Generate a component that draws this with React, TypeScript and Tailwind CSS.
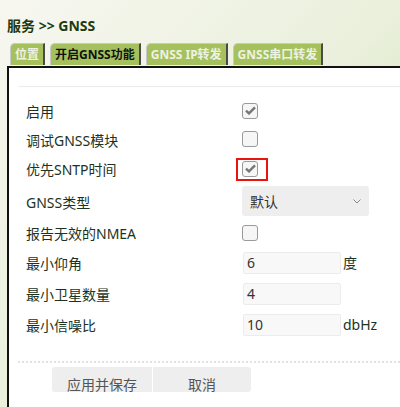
import React from "react";

const font = { fontFamily: '"Noto Sans", "Noto Sans CJK SC", sans-serif' };

function Check({ checked }: { checked?: boolean }) {
  return (
    <div className="w-[16px] h-[16px] rounded-[3px] border border-[#9a9a9a] bg-[#f6f6f6] flex items-center justify-center">
      {checked && (
        <svg width="11" height="9" viewBox="0 0 11 9">
          <path d="M1 4.6 L4 7.4 L10 1.4" fill="none" stroke="#777" strokeWidth="2.4" />
        </svg>
      )}
    </div>
  );
}

function Tab({ label, active }: { label: string; active?: boolean }) {
  return (
    <div
      className={
        "h-[22px] px-[4px] flex items-center text-[12px] font-bold bg-[#a5c15e] border-t border-l border-[#c9c9c9] border-r-2 border-r-[#4a4a4a] rounded-tl-[5px] " +
        (active ? "text-[#111]" : "text-[#eef2e2]")
      }
    >
      {label}
    </div>
  );
}

function Row({ label, h, children }: { label: string; h: string; children?: React.ReactNode }) {
  return (
    <div className={"flex items-center " + h}>
      <div className="w-[224px] text-[14px] text-[#1c3322] pl-[8px] pt-[2px]">{label}</div>
      <div className="flex items-center">{children}</div>
    </div>
  );
}

function Field({ value, unit }: { value: string; unit?: string }) {
  return (
    <>
      <div className="w-[98px] h-[22px] ml-[1px] bg-[#f8f8f8] border border-[#ececec] rounded-[2px] flex items-center pl-[3px] text-[14px] text-[#333]">
        {value}
      </div>
      {unit && <span className="ml-[2px] text-[14px] text-[#1c3322]">{unit}</span>}
    </>
  );
}

export default function App() {
  return (
    <div
      style={font}
      className="w-[400px] h-[407px] overflow-hidden flex flex-col bg-gradient-to-br from-[#f7f7f0] via-[#eaf0dc] to-[#cfdfa8]"
    >
      <h2 className="pt-[15px] pl-[7px] h-[43px] text-[14px] font-bold text-[#1d3a10]">服务 &gt;&gt; GNSS</h2>
      <div className="flex items-end gap-[5px] pl-[10px] h-[22px]">
        <Tab label="位置" />
        <Tab label="开启GNSS功能" active />
        <Tab label="GNSS IP转发" />
        <Tab label="GNSS串口转发" />
      </div>
      <div className="ml-[7px] mt-[1px] flex-1 bg-white border-t-2 border-l-2 border-[#111] pl-[9px]">
        <div className="mt-[18px] border-t border-[#ececec]" />
        <div className="pt-[9px]">
          <Row label="启用" h="h-[29px]">
            <Check checked />
          </Row>
          <Row label="调试GNSS模块" h="h-[28px]">
            <Check />
          </Row>
          <Row label="优先SNTP时间" h="h-[31px]">
            <div className="relative">
              <Check checked />
              <div className="absolute -left-[6px] -top-[3px] w-[32px] h-[23px] border-2 border-[#e8140f]" />
            </div>
          </Row>
          <Row label="GNSS类型" h="h-[34px]">
            <div className="w-[127px] h-[30px] bg-[#eeeeee] rounded-[3px] flex items-center justify-between pl-[8px] pr-[8px] text-[14px] text-[#333]">
              <span>默认</span>
              <svg width="8" height="5" viewBox="0 0 8 5">
                <path d="M0.5 0.5 L4 4 L7.5 0.5" fill="none" stroke="#888" strokeWidth="1" />
              </svg>
            </div>
          </Row>
          <Row label="报告无效的NMEA" h="h-[29px]">
            <Check />
          </Row>
          <Row label="最小仰角" h="h-[31px]">
            <Field value="6" unit="度" />
          </Row>
          <Row label="最小卫星数量" h="h-[31px]">
            <Field value="4" />
          </Row>
          <Row label="最小信噪比" h="h-[31px]">
            <Field value="10" unit="dbHz" />
          </Row>
        </div>
        <div className="mt-[21px] border-t-2 border-dotted border-[#e2e2e2]" />
        <div className="flex pl-[34px] mt-[4px]">
          <div className="w-[100px] h-[25px] bg-[#eeeeee] rounded-l-[3px] overflow-hidden flex justify-center pt-[8px] text-[14px] text-[#555] leading-[20px]">
            应用并保存
          </div>
          <div className="w-[99px] h-[25px] bg-[#eeeeee] rounded-r-[3px] overflow-hidden flex justify-center pt-[8px] text-[14px] text-[#555] leading-[20px] border-l border-white">
            取消
          </div>
        </div>
      </div>
    </div>
  );
}
